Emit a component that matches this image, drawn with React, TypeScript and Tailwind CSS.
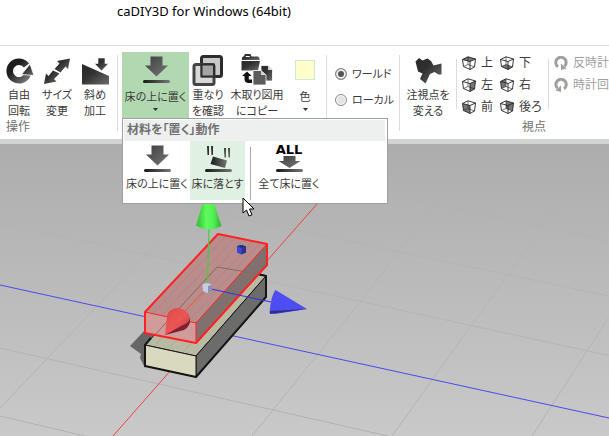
import React, { useState } from 'react';

interface ToolProps {
  label: string[];
  icon: React.ReactNode;
  className: string;
  caret?: boolean;
}

type Face = 'top' | 'bottom' | 'left' | 'right' | 'front' | 'back';

const views: { label: string; face: Face }[] = [
  { label: '上', face: 'top' },
  { label: '下', face: 'bottom' },
  { label: '左', face: 'left' },
  { label: '右', face: 'right' },
  { label: '前', face: 'front' },
  { label: '後ろ', face: 'back' },
];

const facePoints: Record<Face, string> = {
  top: '0.5,3.5 6,0.8 13.5,3 8,5.5',
  bottom: '1.5,10.5 6,8.5 12.5,11 8,13.5',
  left: '8,5.5 13.5,3 12.5,11 8,13.5',
  right: '0.5,3.5 6,0.8 6,8.5 1.5,10.5',
  front: '0.5,3.5 8,5.5 8,13.5 1.5,10.5',
  back: '6,0.8 13.5,3 12.5,11 6,8.5',
};

const Icon = ({ children }: { children: React.ReactNode }) => (
  <svg width="32" height="32" viewBox="0 0 32 32" className="block shrink-0 overflow-visible" fill="url(#steel)" aria-hidden="true">
    {children}
  </svg>
);

const RotateIcon = () => (
  <Icon>
    <path d="M23.5 10.5A9.3 9.3 0 1 0 24.8 19" fill="none" stroke="url(#steelLine)" strokeWidth="6.5" />
    <path d="M27 9L31 20.5L18.5 19.5Z" stroke="#fff" strokeWidth="0.8" />
  </Icon>
);

const ResizeIcon = () => (
  <Icon>
    <path d="M29 3.5L27 14L24.5 11.5L19.5 17.5L13.5 14L18.5 8.5L16 6Z" />
    <path d="M3 29L5 18.5L7.5 21L12 15.5L18.5 18.5L13 24L15.5 26.5Z" />
  </Icon>
);

const SlantIcon = () => (
  <Icon>
    <path d="M3 9L30 21V29.5H3Z" />
    <path d="M19 3H26V8.5H29.5L22.5 16L15.5 8.5H19Z" stroke="#fff" strokeWidth="0.6" />
  </Icon>
);

const PlaceIcon = () => (
  <Icon>
    <path d="M10.5 1.5H22.5V10.5H28L16.5 21.5L5 10.5H10.5Z" fill="url(#arrow)" />
    <rect x="3" y="25" width="27" height="3" rx="1.5" fill="url(#bar)" />
  </Icon>
);

const DropIcon = () => (
  <Icon>
    <path d="M5 2H7V11H5.5ZM9 2H11V11H9.5ZM22 4H24V13.5H22.5ZM26 4H28V13.5H26.5Z" />
    <path d="M11 12.5L25 16.5L23 24L8.5 20Z" fill="url(#bar)" />
    <rect x="3" y="25" width="27" height="3" rx="1.5" fill="url(#bar)" />
  </Icon>
);

const PlaceAllIcon = () => (
  <Icon>
    <text x="16" y="10" textAnchor="middle" fill="#000" className="font-['DejaVu_Sans',sans-serif] text-[13px] font-bold">ALL</text>
    <path d="M10.5 12H22.5V17H27.5L16.5 24L5.5 17H10.5Z" fill="url(#arrow)" />
    <rect x="3" y="25" width="27" height="3" rx="1.5" fill="url(#bar)" />
  </Icon>
);

const OverlapIcon = () => (
  <Icon>
    <rect x="9.5" y="1.5" width="20" height="20" rx="2" fill="#c8c8c8" stroke="#2c2c2c" strokeWidth="3" />
    <rect x="2" y="9.5" width="20" height="20" rx="2" fill="#c8c8c8" fillOpacity="0.7" stroke="#444" strokeWidth="3" />
    <rect x="9.5" y="9.5" width="12.5" height="12" fill="#a4a4a4" stroke="#2c2c2c" strokeWidth="2" />
  </Icon>
);

const CopyIcon = () => (
  <Icon>
    <path d="M1 5V2.500L3 1L4 -1H9.500L10.500 1.500H17L18.500 3V5Z" />
    <path d="M5 1H8.500L9 2H4.500Z" fill="#fff" />
    <path d="M0.500 6H19L17 15.500H0.500Z" />
    <path d="M6 16.500L10.700 21H7.800V24.500H11V28H7Q3.500 27.500 3.500 24V21H1Z" fill="#111" />
    <path d="M20 10.500H27L31.500 15V26H20Z" stroke="#fff" strokeWidth="0.8" />
    <path d="M12 15.500H20L25 20V30H12Z" fill="#5c5c5c" stroke="#fff" strokeWidth="0.8" />
    <path d="M20 15.500V20H25ZM27 10.500V15H31.500Z" fill="#d8d8d8" />
  </Icon>
);

const CameraIcon = () => (
  <Icon>
    <path d="M3.500 6.500L7 3L10.500 5.500L15.500 3.500L19 6L21.500 10.500L29.500 8.500V19.500H26.500L22.500 17L18 19L13.500 28.500L8 24L10.500 18.500L6 16.500Z" />
  </Icon>
);

const CubeIcon = ({ face }: { face: Face }) => (
  <svg width="14" height="14" viewBox="0 0 14 14" className="block shrink-0" fill="none" stroke="#222" strokeWidth="0.9" strokeLinejoin="round" aria-hidden="true">
    <polygon points={facePoints[face]} fill="#777" stroke="none" />
    <path d="M0.500 3.500L6 0.800L13.500 3L12.500 11L8 13.500L1.500 10.500ZM0.500 3.500L8 5.500L13.500 3M8 5.500V13.500" />
    <path d="M6 0.800V8.500L1.500 10.500M6 8.500L12.500 11" strokeWidth="0.6" />
  </svg>
);

const TurnIcon = ({ flip }: { flip?: boolean }) => (
  <svg width="14" height="14" viewBox="0 0 14 14" className="block shrink-0" aria-hidden="true">
    <g transform={flip ? 'matrix(-1 0 0 1 14 0)' : undefined}>
      <path d="M4 10.800A5.200 5.200 0 1 1 10.500 10.300" fill="none" stroke="#a0a0a0" strokeWidth="3" />
      <path d="M7 7.500V14L12.500 12.500Z" fill="#a0a0a0" />
    </g>
  </svg>
);

const Caret = () => (
  <svg width="5" height="3" viewBox="0 0 5 3" className="mt-[3px] block" aria-hidden="true">
    <path d="M0 0H5L2.500 3Z" fill="#333" />
  </svg>
);

const Tool = ({ label, icon, className, caret }: ToolProps) => (
  <button type="button" className={`flex shrink-0 flex-col items-center whitespace-nowrap pt-[3px] text-[11px] leading-4 ${className}`}>
    {icon}
    <span className={caret ? 'block pt-0.5' : 'block'}>
      {label.map((line) => (
        <span key={line} className="block">{line}</span>
      ))}
    </span>
    {caret && <Caret />}
  </button>
);

const Divider = ({ className }: { className: string }) => (
  <div className={`w-px shrink-0 ${className}`} />
);

const PlaceMenu = () => (
  <div className="absolute left-0 top-full z-10 w-[266px] border border-[#a0a0a0] bg-white p-px">
    <div className="mr-px flex h-[21px] items-center bg-[#eef0f0] px-[3px] font-bold text-[#707070]">材料を「置く」動作</div>
    <div className="flex h-[61px] pb-0.5">
      <Tool className="w-[66px]" icon={<PlaceIcon />} label={['床の上に置く']} />
      <Tool className="w-[55px] bg-[#e0f0e2]" icon={<DropIcon />} label={['床に落とす']} />
      <Divider className="ml-[5px] mt-1.5 h-[53px] bg-[#a8a8a8]" />
      <Tool className="ml-1 w-[68px]" icon={<PlaceAllIcon />} label={['全て床に置く']} />
    </div>
    <svg width="13" height="21" viewBox="0 0 13 21" className="absolute left-[119px] top-[78px]" aria-hidden="true">
      <path d="M1 1V16L4.500 13L7 19L10 17.800L7.500 12H12Z" fill="#fff" stroke="#000" strokeWidth="1" />
    </svg>
  </div>
);

const Scene = () => (
  <svg viewBox="0 144 609 292" preserveAspectRatio="xMidYMin slice" className="block w-full grow" role="img" aria-label="3D">
    <rect x="0" y="144" width="609" height="292" fill="url(#sky)" />
    <g stroke="url(#grid)" strokeWidth="1" fill="none">
      <path d="M0 348L388 436M0 416L85 436M0 223L609 355.500M83 185L609 296M300 175L609 241M400 150L609 192" />
      <path d="M0 408L160 240M252 436L360 302L450 185M392 436L470 327L560 204M532 436L609 317" />
    </g>
    <path d="M0 285L609 418" stroke="#4a4af0" strokeWidth="1" />
    <path d="M113 436L317 204" stroke="#f04040" strokeWidth="1" />
    <polygon points="130,346 145,330 160,334 145,368 140,358 141,354" fill="#666" />

    {/* lower board */}
    <g stroke="#151515" strokeLinejoin="round">
      <polygon points="145,345 218,267 266,276 196,356" fill="#b9b9a4" strokeWidth="1" />
      <polygon points="196,356 266,276 266,297 196,377" fill="#6c6c6a" strokeWidth="1" />
      <polygon points="145,345 196,356 196,377 145,366" fill="#d9d9c0" strokeWidth="1" />
      <path d="M258 274L266 276V297L196 377L145 366V345L151 338" fill="none" strokeWidth="2" />
    </g>
    <path d="M156 344L226 272M170 347L238 275M184 351L253 277" stroke="#9c9c8b" strokeWidth="0.6" />

    {/* selected board */}
    <g strokeLinejoin="round">
      <polygon points="145,312 218,234 267,244 196,323" fill="#b98d8b" />
      <polygon points="196,323 267,244 267,265 196,343" fill="#80716f" />
      <polygon points="145,312 196,323 196,343 145,333" fill="#cf9c9a" />
      <path d="M153 313L225 237M162 315L234 239M171 317L243 240M181 319L252 242M190 320L260 243" stroke="#a98180" strokeWidth="0.6" />
      <path d="M154 336L217 267L258 274" fill="none" stroke="#8d6764" strokeWidth="1" />
      <path d="M145 312L196 323L267 244M196 323V343" fill="none" stroke="#ff2020" strokeWidth="1" />
      <path d="M145 312L218 234L267 244V265L196 343L145 333Z" fill="none" stroke="#ff2020" strokeWidth="2" />
    </g>

    {/* move handles */}
    <path d="M209 228L207.500 285" stroke="#3fd03f" strokeWidth="1.2" />
    <path d="M208 185L221.500 226Q209 233 196 225.500Z" fill="url(#greenCone)" />
    <path d="M211 289L271 302" stroke="#3535d8" strokeWidth="1.2" />
    <path d="M307 309L275.500 290Q271 295 269.500 313L275 314Z" fill="#4d4df2" />
    <path d="M307 309L270 314L270 311Z" fill="#2f2f88" />
    <path d="M206 289L184 312" stroke="#f05030" strokeWidth="1" />
    <path d="M190 318Q191 326 184 330L165 335L172 328Z" fill="#7e1f35" />
    <path d="M165 335L167 316Q169 308 178 308Q188 309 190 318Q189 323 183 325Z" fill="url(#redCone)" />
    <path d="M202.500 284L208 283L212 285V291.500L206.500 293L203 291Z" fill="#c4cbe4" />
    <path d="M208 286L212 285V291.500L208 293Z" fill="#8990b2" />
    <path d="M237 246L242 245L246 246.500V252.500L241 254.500L237 252.500Z" fill="#3a48d0" />
    <path d="M237 246L242 245L246 246.500L241.500 248Z" fill="#252c70" />
    <path d="M242 248L246 246.500V252.500L241.500 254.500Z" fill="#28348e" />
  </svg>
);

const Gradients = () => (
  <svg width="0" height="0" className="absolute" aria-hidden="true">
    <defs>
      <linearGradient id="steel" x1="0" y1="0" x2="1" y2="1">
        <stop offset="0" stopColor="#2a2a2a" />
        <stop offset="0.4" stopColor="#303030" />
        <stop offset="1" stopColor="#6c6c6c" />
      </linearGradient>
      <linearGradient id="steelLine" x1="0" y1="0" x2="1" y2="1">
        <stop offset="0.3" stopColor="#1c1c1c" />
        <stop offset="1" stopColor="#777" />
      </linearGradient>
      <linearGradient id="arrow" x1="0" y1="0" x2="1" y2="1">
        <stop offset="0.1" stopColor="#444" />
        <stop offset="1" stopColor="#777" />
      </linearGradient>
      <linearGradient id="bar" x1="0" y1="0" x2="1" y2="0">
        <stop offset="0" stopColor="#181818" />
        <stop offset="1" stopColor="#777" />
      </linearGradient>
      <linearGradient id="sky" x1="0" y1="0" x2="0" y2="1">
        <stop offset="0" stopColor="#adadad" />
        <stop offset="1" stopColor="#c9c9c9" />
      </linearGradient>
      <linearGradient id="grid" gradientUnits="userSpaceOnUse" x1="0" y1="160" x2="0" y2="420">
        <stop offset="0" stopColor="#a8a8a8" stopOpacity="0" />
        <stop offset="1" stopColor="#b2b2b2" />
      </linearGradient>
      <linearGradient id="greenCone" x1="0" y1="0" x2="1" y2="0">
        <stop offset="0.1" stopColor="#3cc83c" />
        <stop offset="0.4" stopColor="#5dfb5d" />
        <stop offset="0.7" stopColor="#50ee50" />
        <stop offset="1" stopColor="#2fae2f" />
      </linearGradient>
      <linearGradient id="redCone" x1="0" y1="0" x2="1" y2="1">
        <stop offset="0" stopColor="#d84848" />
        <stop offset="0.5" stopColor="#ee5555" />
        <stop offset="1" stopColor="#b83c40" />
      </linearGradient>
    </defs>
  </svg>
);

const App = () => {
  const [axis, setAxis] = useState('world');

  const axes = [
    { id: 'world', label: 'ワールド' },
    { id: 'local', label: 'ローカル' },
  ];

  return (
    <div className="flex min-h-screen flex-col overflow-hidden bg-white font-['Liberation_Sans','Noto_Sans_CJK_JP',sans-serif] text-[12px] leading-[17px] text-[#3a3a3a] [font-feature-settings:'palt']">
      <Gradients />
      <header className="h-[46px] border-b border-[#dcdcdc] pl-[117px] pt-[3px]">
        <h1 className="whitespace-pre font-['Noto_Sans','Noto_Sans_CJK_JP',sans-serif] text-[13px] leading-4 text-black">caDIY3D for Windows (64bit)</h1>
      </header>

      <div className="flex h-[93px] pt-1.5">
        <section className="shrink-0">
          <div className="flex h-[67px]">
            <Tool className="w-[38px]" icon={<RotateIcon />} label={['自由', '回転']} />
            <Tool className="w-[38px]" icon={<ResizeIcon />} label={['サイズ', '変更']} />
            <Tool className="w-[38px]" icon={<SlantIcon />} label={['斜め', '加工']} />
          </div>
          <div className="pl-1.5 text-[#707070]">操作</div>
        </section>
        <Divider className="ml-[3px] mr-1 mt-[3px] h-[76px] bg-[#dcdcdc]" />

        <section className="flex h-[66px] shrink-0">
          <div className="relative flex">
            <Tool className="w-[67px] bg-[#b1d8b1]" icon={<PlaceIcon />} label={['床の上に置く']} caret />
            <PlaceMenu />
          </div>
          <Tool className="w-[38px]" icon={<OverlapIcon />} label={['重なり', 'を確認']} />
          <Tool className="w-[60px]" icon={<CopyIcon />} label={['木取り図用', 'にコピー']} />
          <Tool
            className="w-9"
            icon={
              <span className="flex h-8 items-start pt-[5px]">
                <span className="block size-5 border border-[#cfe8dc] bg-[#ffffcc]" />
              </span>
            }
            label={['色']}
            caret
          />
        </section>
        <Divider className="ml-[3px] mt-[3px] h-[76px] bg-[#dcdcdc]" />

        <fieldset className="w-[72px] shrink-0 pl-2 pt-[9px] text-[11px]">
          {axes.map((a) => (
            <label key={a.id} className="flex h-[26px] items-center gap-[5px] whitespace-nowrap">
              <input
                type="radio"
                name="axis"
                value={a.id}
                checked={axis === a.id}
                onChange={() => setAxis(a.id)}
                className="size-3 shrink-0 appearance-none rounded-full border border-[#8a8a8a] bg-[#e4e4e4] shadow-[inset_0_0_0_1px_#fff] checked:bg-[#555] checked:shadow-[inset_0_0_0_2px_#eee]"
              />
              {a.label}
            </label>
          ))}
        </fieldset>
        <Divider className="mt-[3px] h-[76px] bg-[#dcdcdc]" />

        <section className="w-[268px] shrink-0">
          <div className="flex h-[67px]">
            <Tool className="w-14" icon={<CameraIcon />} label={['注視点を', '変える']} />
            <Divider className="mt-[7px] h-[50px] bg-[#dcdcdc]" />
            <div className="grid h-[66px] w-[91px] shrink-0 grid-cols-[38px_1fr] grid-rows-3 pl-[5px]">
              {views.map((v) => (
                <button key={v.label} type="button" className="flex items-center gap-[5px] whitespace-nowrap">
                  <CubeIcon face={v.face} />
                  {v.label}
                </button>
              ))}
            </div>
            <Divider className="mt-[7px] h-[50px] bg-[#dcdcdc]" />
            <div className="pl-[5px] text-[#a0a0a0]">
              <button type="button" disabled className="flex h-[22px] items-center gap-[5px] whitespace-nowrap">
                <TurnIcon />
                反時計
              </button>
              <button type="button" disabled className="flex h-[22px] items-center gap-[5px] whitespace-nowrap">
                <TurnIcon flip />
                時計回
              </button>
            </div>
          </div>
          <div className="text-center text-[#707070]">視点</div>
        </section>
      </div>

      <div className="h-[5px] bg-[#d2d4d4]" />
      <Scene />
    </div>
  );
};

export default App;
